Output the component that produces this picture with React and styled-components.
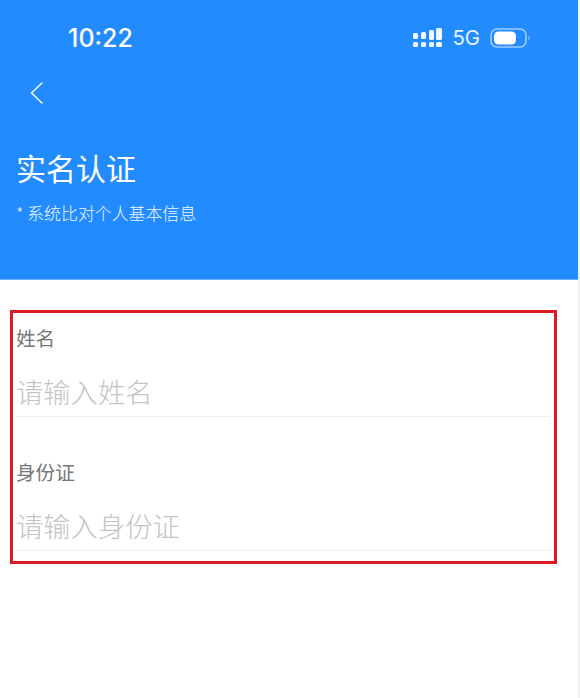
import React from "react";
import styled, { createGlobalStyle } from "styled-components";

const Global = createGlobalStyle`
  html, body {
    margin: 0;
    padding: 0;
    background: #fff;
    font-family: "Noto Sans CJK SC", "Inter", sans-serif;
  }
  * { box-sizing: border-box; }
`;

const Page = styled.div`
  width: 580px;
  height: 698px;
  overflow: hidden;
  background: #fff;
  border-right: 2px solid #f0f0f1;
`;

const Header = styled.header`
  width: 580px;
  height: 280px;
  background: #228bfe;
  color: #fff;
  padding: 24px 0 0 16px;
  border-bottom: 1px solid #6fb2fb;
`;

const StatusBar = styled.div`
  display: flex;
  align-items: center;
  height: 28px;
  padding: 0 49px 0 52px;
`;

const Time = styled.span`
  font-family: "Inter", sans-serif;
  font-size: 25px;
  font-weight: 500;
  line-height: 28px;
`;

const StatusIcons = styled.div`
  display: flex;
  align-items: center;
  margin-left: auto;
`;

const Network = styled.span`
  font-family: "Inter", sans-serif;
  font-size: 20.4px;
  line-height: 28px;
  margin: 0 10px 0 10px;
  color: #e6f2ff;
`;

const BackButton = styled.button`
  display: block;
  width: 24px;
  height: 30px;
  margin: 26px 0 0 9px;
  padding: 0;
  border: 0;
  background: none;
`;

const Title = styled.h1`
  margin: 39px 0 0;
  font-size: 30px;
  font-weight: 400;
  line-height: 40px;
`;

const Note = styled.p`
  margin: 14px 0 0;
  font-size: 16.9px;
  font-weight: 300;
  line-height: 24px;
  color: #f0f7ff;
`;

const Form = styled.form`
  width: 547px;
  height: 254px;
  margin: 30px 0 0 10px;
  padding: 8px 4px 0 3px;
  border: 3px solid #dc1a22;
`;

const Field = styled.div`
  height: 96px;
  margin-bottom: 38px;
  border-bottom: 1px solid #eeeeee;
  &:last-child { margin-bottom: 0; }
`;

const Label = styled.label`
  display: block;
  height: 34px;
  font-size: 19.6px;
  font-weight: 400;
  line-height: 34px;
  color: #777;
`;

const Input = styled.input`
  display: block;
  width: 100%;
  height: 40px;
  margin-top: 16px;
  padding: 0;
  border: 0;
  outline: 0;
  background: none;
  font-family: "Noto Sans CJK SC", sans-serif;
  font-size: 27.3px;
  font-weight: 300;
  &::placeholder { color: #c4c4c4; opacity: 1; }
`;

function SignalIcon() {
  return (
    <svg width="30" height="20" viewBox="0 0 30 20" fill="#f2f8ff">
      <rect x="1" y="5" width="5" height="6" rx="1.5" />
      <rect x="1" y="14" width="5" height="5" rx="1.5" />
      <rect x="9" y="4" width="5" height="7" rx="1.5" />
      <rect x="9" y="14" width="5" height="5" rx="1.5" />
      <rect x="17" y="2" width="5" height="10" rx="1.5" />
      <rect x="17" y="14" width="5" height="5" rx="1.5" />
      <rect x="24" y="0" width="6" height="12" rx="1.5" />
      <rect x="24" y="14" width="6" height="5" rx="1.5" />
    </svg>
  );
}

function BatteryIcon() {
  return (
    <svg width="41" height="20" viewBox="0 0 41 20">
      <rect x="1" y="1" width="35" height="18" rx="6" fill="none" stroke="#9ccbff" strokeWidth="1.6" />
      <rect x="4" y="3.5" width="22" height="13" rx="4.5" fill="#fff" />
      <path d="M38.5 7.5 C40 8.5 40 11.5 38.5 12.5 Z" fill="#9ccbff" />
    </svg>
  );
}

function BackIcon() {
  return (
    <svg width="24" height="30" viewBox="0 0 24 30" fill="none">
      <path d="M17 5 L6.5 15 L17 25" stroke="#fff" strokeWidth="1.4" strokeLinecap="round" strokeLinejoin="round" />
    </svg>
  );
}

export default function App() {
  return (
    <Page>
      <Global />
      <Header>
        <StatusBar>
          <Time>10:22</Time>
          <StatusIcons>
            <SignalIcon />
            <Network>5G</Network>
            <BatteryIcon />
          </StatusIcons>
        </StatusBar>
        <BackButton type="button" aria-label="返回">
          <BackIcon />
        </BackButton>
        <Title>实名认证</Title>
        <Note>* 系统比对个人基本信息</Note>
      </Header>
      <Form>
        <Field>
          <Label htmlFor="name">姓名</Label>
          <Input id="name" placeholder="请输入姓名" />
        </Field>
        <Field>
          <Label htmlFor="idcard">身份证</Label>
          <Input id="idcard" placeholder="请输入身份证" />
        </Field>
      </Form>
    </Page>
  );
}
